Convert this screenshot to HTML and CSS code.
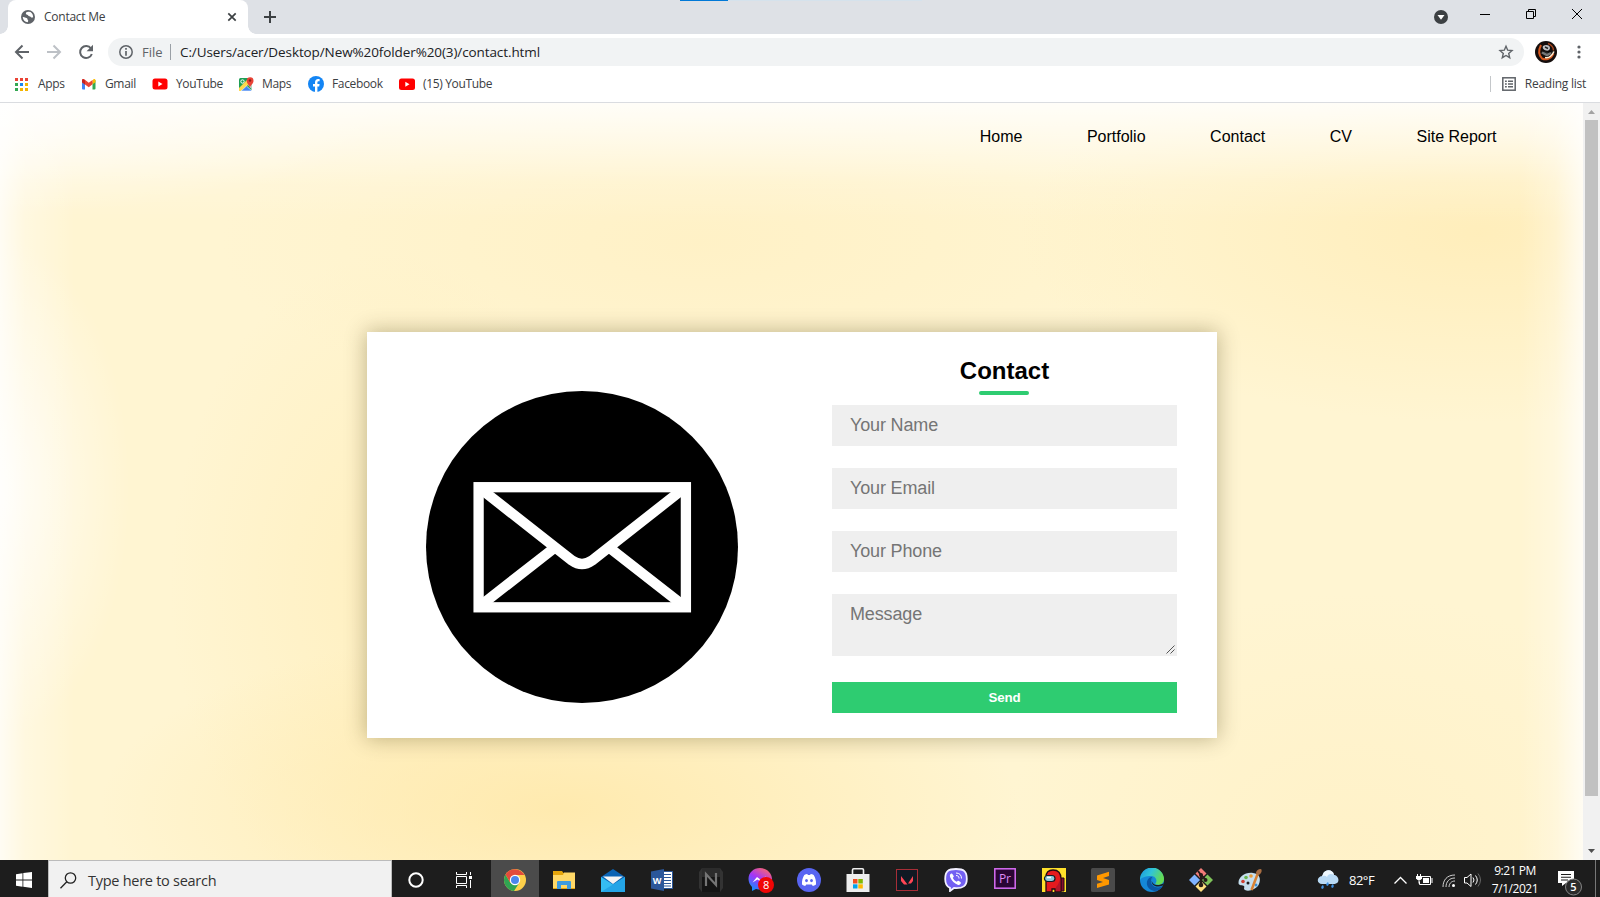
FILE: index.html
```html
<!DOCTYPE html>
<html lang="en">
<head>
<meta charset="utf-8">
<title>Contact Me</title>
<link rel="stylesheet" href="styles.css">
</head>
<body>
<div class="tabstrip">
  <div class="tab">
    <svg class="tab-icon" width="14" height="14" viewBox="0 0 14 14"><circle cx="7" cy="7" r="7" fill="#5f6368"/><path d="M7.500 1.800C5 2 4.600 3 5 4c.5 1 2 .5 2.200 1.500.3 1.200 2 .6 2.600 1.500.4.8 1.200.5 2.400.2C12 3.500 10 1.600 7.500 1.800zM1.700 7c.2 3 2.300 5 5 5.300.5-1 .8-1.600.2-2.300-.7-.8-.3-1.800-1.400-2-1.300-.2-2.100-1.400-3.800-1z" fill="#fff"/></svg>
    <span class="tab-title">Contact Me</span>
    <svg class="tab-close" width="10" height="10" viewBox="0 0 10 10" stroke="#3c4043" stroke-width="1.700"><path d="M1.300 1.300l7.400 7.400M8.700 1.300L1.300 8.700"/></svg>
  </div>
  <svg class="new-tab" width="14" height="14" viewBox="0 0 14 14" stroke="#3c4043" stroke-width="2"><path d="M7 1v12M1 7h12"/></svg>
  <div class="load-bars"><i class="load-blue"></i><i class="load-pale"></i></div>
  <div class="win-controls">
    <svg width="46" height="34" viewBox="0 0 46 34"><circle cx="25" cy="17" r="7" fill="#3c4043"/><path d="M21.500 15h7L25 19.800z" fill="#fff"/></svg>
    <svg width="46" height="34" viewBox="0 0 46 34"><path d="M18 14.500h10" stroke="#000"/></svg>
    <svg width="46" height="34" viewBox="0 0 46 34" fill="none" stroke="#000"><path d="M18.500 11.500h7v7h-7zM20.500 11.500v-2h7v7h-2"/></svg>
    <svg width="46" height="34" viewBox="0 0 46 34" stroke="#000"><path d="M18 9l10 10M28 9L18 19"/></svg>
  </div>
</div>
<div class="toolbar">
  <svg class="nav-icons" width="108" height="36" viewBox="0 0 108 36" fill="none" stroke-width="2">
    <path d="M29 18H16.500M22.500 11.500L16 18l6.500 6.500" stroke="#5f6368"/>
    <path d="M47 18h12.500M53.500 11.500L60 18l-6.500 6.500" stroke="#bdc1c6"/>
    <path d="M91 14.500A6 6 0 1 0 91.800 20" stroke="#5f6368"/><path d="M93 10.800v6.400h-6.400z" fill="#5f6368"/>
  </svg>
  <div class="omnibox">
    <svg width="14" height="14" viewBox="0 0 14 14"><circle cx="7" cy="7" r="6.200" fill="none" stroke="#5f6368" stroke-width="1.500"/><path d="M7 3v1.700M7 6v4.800" stroke="#5f6368" stroke-width="1.700"/></svg>
    <span class="scheme">File</span><i class="divider"></i>
    <span class="url">C:/Users/acer/Desktop/New%20folder%20(3)/contact.html</span>
    <svg class="star" width="16" height="16" viewBox="0 0 16 16" fill="none" stroke="#5f6368" stroke-width="1.400"><path d="M8 2.200l1.700 4 4.300.4-3.300 2.900 1 4.200L8 11.500l-3.700 2.200 1-4.200L2 6.600l4.300-.4z"/></svg>
  </div>
  <svg class="avatar" width="22" height="22" viewBox="0 0 22 22"><circle cx="11" cy="11" r="11" fill="#140d0c"/><path d="M6 4C3.500 9 3.500 14 7 17.500c4 2 9 .5 11.500-5" fill="none" stroke="#d4561c" stroke-width="2"/><path d="M13 2.500c3 1 5.500 4 5.500 7" fill="none" stroke="#a8441a" stroke-width="1.500"/><path d="M8 5c3-2 7-1 7 2 0 2-2 3-4 2.500S7 7.500 8 5z" fill="#bfc1c5"/><path d="M10 6l3 1.500M6 12l4-1 5 2 3-3" stroke="#222" stroke-width="1.500"/><path d="M7 11.500l5 2.500 4-2" fill="none" stroke="#777" stroke-width="2.500"/><path d="M10 16.500c4 1 7-2 9-6" fill="none" stroke="#fff0d5" stroke-width="1.500"/></svg>
  <svg class="kebab" width="4" height="14" viewBox="0 0 4 14" fill="#5f6368"><circle cx="2" cy="2" r="1.600"/><circle cx="2" cy="7" r="1.600"/><circle cx="2" cy="12" r="1.600"/></svg>
</div>
<div class="bookmarks">
  <div class="bm bm-apps"><svg width="14" height="14" viewBox="0 0 14 14"><path d="M1 1h3v3H1zM6 1h3v3H6zM11 1h3v3h-3z" fill="#ea4335"/><path d="M1 6h3v3H1z" fill="#34a853"/><path d="M6 6h3v3H6z" fill="#1a86f0"/><path d="M11 6h3v3h-3zM6 11h3v3H6zM11 11h3v3h-3z" fill="#f4b400"/><path d="M1 11h3v3H1z" fill="#34a853"/></svg><span>Apps</span></div>
  <div class="bm bm-gmail"><svg width="15" height="12" viewBox="0 0 15 12"><path d="M1 2l3 2v7.500H2a1 1 0 0 1-1-1z" fill="#4285f4"/><path d="M14.500 2l-3 2v7.500h2a1 1 0 0 0 1-1z" fill="#34a853"/><path d="M11.500 2.500l1-1.200c1-.8 2 0 2 1.200v1.800l-3 2z" fill="#fbbc04"/><path d="M1 4.300V2.500C1 1 2.200.5 3.300 1.300L7.750 4.700l3.750-2.800v4.400L7.750 9.200 4 6.400z" fill="#ea4335"/><path d="M1 4.300V2.500c0-.8.4-1.300 1-1.500l2 1.500v4z" fill="#c5221f"/></svg><span>Gmail</span></div>
  <div class="bm bm-yt"><svg width="16" height="12" viewBox="0 0 16 12"><rect x=".5" y=".5" width="15" height="11" rx="2.500" fill="#f00"/><path d="M6.300 3.500v5l4.200-2.500z" fill="#fff"/></svg><span>YouTube</span></div>
  <div class="bm bm-maps"><svg width="16" height="16" viewBox="0 0 16 16"><rect x="1" y="2" width="12.500" height="13" rx="1.500" fill="#1e9e55"/><path d="M1 12l9-9 3.500 3L3 15H1z" fill="#ffd84c"/><path d="M3 15l5.500-5L14 15z" fill="#4285f4" stroke="#fff" stroke-width=".6"/><path d="M10 9l3.500 4V7z" fill="#dcdcdc"/><circle cx="4.500" cy="5.500" r="1.700" fill="none" stroke="#fff"/><path d="M12 12c-.3-3-3.300-4-3.300-7.300a3.400 3.400 0 0 1 6.800 0C15.500 8 12.300 9 12 12z" fill="#e94235"/><circle cx="12" cy="4.500" r="1.200" fill="#8a1f17"/></svg><span>Maps</span></div>
  <div class="bm bm-fb"><svg width="16" height="16" viewBox="0 0 16 16"><circle cx="8" cy="8" r="8" fill="#1485f4"/><path d="M7 16v-5.500H5V8h2V6.500C7 4.300 8.200 3 10.200 3l1.400.1v2.200h-1C9.600 5.300 9.400 5.900 9.400 6.500V8h2.200l-.4 2.500H9.400V16z" fill="#fff"/></svg><span>Facebook</span></div>
  <div class="bm bm-yt2"><svg width="16" height="12" viewBox="0 0 16 12"><rect y=".5" width="16" height="11.500" rx="2.500" fill="#f00"/><path d="M6.300 3.800v5l4.200-2.500z" fill="#fff"/></svg><span>(15) YouTube</span></div>
  <div class="reading"><svg width="14" height="14" viewBox="0 0 14 14" fill="none" stroke="#5f6368" stroke-width="1.500"><rect x=".8" y=".8" width="12.400" height="12.400"/><path d="M3 4.200h1.800M6 4.200h5M3 7h1.800M6 7h5M3 9.800h1.800M6 9.800h5"/></svg><span>Reading list</span></div>
</div>
<div class="viewport">
  <main class="page">
    <nav class="menu"><a>Home</a><a>Portfolio</a><a>Contact</a><a>CV</a><a>Site Report</a></nav>
    <section class="card">
      <svg class="mail-art" width="430" height="406" viewBox="367 332 430 406">
        <circle cx="582" cy="547" r="156"/>
        <g fill="none" stroke="#fff" stroke-width="10.300"><rect x="478.600" y="487.200" width="207.300" height="120.100"/><path d="M480 488.300l92 72.200q10 7 20 0L684 488.300M480 606l73-57M684 606l-73-57"/></g>
      </svg>
      <form class="form">
        <h2>Contact</h2>
        <input class="field" type="text" placeholder="Your Name">
        <input class="field" type="text" placeholder="Your Email">
        <input class="field" type="text" placeholder="Your Phone">
        <div class="message-box">
          <textarea class="field message" placeholder="Message"></textarea>
          <svg class="grip" width="9" height="9" viewBox="0 0 9 9" stroke="#555"><path d="M.5 8.500l8-8M4.500 8.500l4-4"/></svg>
        </div>
        <button class="send" type="button">Send</button>
      </form>
    </section>
  </main>
  <div class="scrollbar">
    <svg width="17" height="17" viewBox="0 0 17 17"><path d="M5 11l3.500-4L12 11z" fill="#a3a3a3"/></svg>
    <i class="thumb"></i>
    <svg class="down" width="17" height="17" viewBox="0 0 17 17"><path d="M5 6l3.500 4L12 6z" fill="#505050"/></svg>
  </div>
</div>
<div class="taskbar">
  <div class="start"><svg width="16" height="16" viewBox="0 0 16 16" fill="#fff"><path d="M0 2.200l6.500-.9v6.300H0zM7.300 1.100L16 0v7.600H7.300zM0 8.400h6.500v6.300L0 13.800zM7.300 8.400H16V16l-8.700-1.200z"/></svg></div>
  <div class="search"><svg width="17" height="17" viewBox="0 0 17 17" fill="none" stroke="#222" stroke-width="1.300"><circle cx="10.500" cy="6" r="5.200"/><path d="M6.800 9.700L.5 16.200"/></svg><span>Type here to search</span></div>
  <div class="sys"><svg width="18" height="18" viewBox="0 0 18 18"><circle cx="9" cy="9" r="6.700" fill="none" stroke="#fff" stroke-width="2"/></svg></div>
  <div class="sys"><svg width="18" height="16" viewBox="0 0 18 16" fill="none" stroke="#fff"><path d="M1.500 0v2.500h10V0M1.500 16v-2.500h10V16M1.500 4.500h10v7h-10zM15.500 0v3M15.500 8v8"/><path d="M14 4h3v3h-3z" fill="#fff" stroke="none"/></svg></div>
  <div class="apps">
    <div class="app active"><svg width="22" height="22" viewBox="0 0 22 22"><circle cx="11" cy="11" r="11" fill="#fdd04a"/><path d="M1.500 5.500A11 11 0 0 0 10 22l5.500-8.500L6.500 14z" fill="#30a452"/><path d="M1.500 5.500L6.200 13.500l4.800-7.500h9.500A11 11 0 0 0 1.500 5.500z" fill="#e24b3c"/><circle cx="11" cy="11" r="5.200" fill="#fff"/><circle cx="11" cy="11" r="4" fill="#4a86ed"/></svg></div>
    <div class="app"><svg width="22" height="18" viewBox="0 0 22 18"><path d="M0 0h9l1.500 2H22v16H0z" fill="#e5a50b"/><path d="M0 4h10l1-2.500h11V17H0z" fill="#ffd867"/><path d="M4 18v-7q0-1 1-1h12q1 0 1 1v7h-4v-4H8v4z" fill="#3d9be0"/></svg></div>
    <div class="app"><svg width="24" height="23" viewBox="0 0 24 23"><path d="M0 8L12 0l12 8v15H0z" fill="#0a63b4"/><path d="M0 8l12 7.500L24 8v15H0z" fill="#35bdf2"/><path d="M2 7.500h20l-10 7.500z" fill="#f4f4f4"/><path d="M0 23L24 8v15z" fill="#1995df" opacity=".6"/></svg></div>
    <div class="app"><svg width="22" height="22" viewBox="0 0 22 22"><path d="M12 2.500h9.500v17H12z" fill="#fff" stroke="#2b579a"/><path d="M13 5.500h7M13 8.500h7M13 11.500h7M13 14.500h7M13 17h7" stroke="#2b579a"/><path d="M0 2.500L13 0v22L0 19.500z" fill="#2b579a"/><text class="word-letter" x="1.800" y="14.700">W</text></svg></div>
    <div class="app"><svg width="24" height="24" viewBox="0 0 24 24"><path d="M3 0h18l3 4v16l-3 4H3l-3-4V4z" fill="#333"/><path d="M3 0h18v24H3z" fill="#151515"/><path d="M3 0h18v9H3z" fill="#2c2c2c"/><path d="M7 18V6l10 11V5" fill="none" stroke="#757575" stroke-width="2.200"/></svg></div>
    <div class="app msgr"><svg width="26" height="26" viewBox="0 0 26 26"><defs><linearGradient id="ms" x1=".8" y1="0" x2=".2" y2="1"><stop offset="0" stop-color="#ff6968"/><stop offset=".5" stop-color="#a334fa"/><stop offset="1" stop-color="#0993ff"/></linearGradient></defs><path d="M12 1C5.500 1 .5 5.700.5 12c0 3.300 1.500 6 3.500 8v4l4-2c10 2.500 16-3 16-10C24 5.700 18.500 1 12 1z" fill="url(#ms)"/><path d="M4.500 15.500l4.500-5.500 4 3 5-4-5 6-3.500-2.500z" fill="#fff"/><circle cx="18" cy="18" r="8" fill="#f00505"/><text class="badge-num" x="15" y="22">8</text></svg></div>
    <div class="app"><svg width="24" height="24" viewBox="0 0 24 24"><circle cx="12" cy="12" r="12" fill="#5865f2"/><path d="M5 16.500c-.3-4 .8-7 2.300-9.500 1-.6 2-.8 3-1l.6 1.100h2.200L13.700 6c1 .2 2 .4 3 1 1.500 2.500 2.600 5.500 2.300 9.500-1.200.9-2.200 1.300-3.200 1.500l-1-1.600h-5.600l-1 1.600C7.200 17.800 6.200 17.400 5 16.500z" fill="#fff"/><ellipse cx="9.500" cy="12.600" rx="1.400" ry="1.600" fill="#5865f2"/><ellipse cx="14.500" cy="12.600" rx="1.400" ry="1.600" fill="#5865f2"/></svg></div>
    <div class="app"><svg width="24" height="24" viewBox="0 0 24 24"><path d="M6.500 7V2q0-1.200 1.200-1.200h8.600q1.200 0 1.200 1.200v5" fill="none" stroke="#eee" stroke-width="1.600"/><path d="M.5 6h23v18H.5z" fill="#eee"/><path d="M7 11h4.500v4.500H7z" fill="#f25022"/><path d="M12.300 11h4.500v4.500h-4.500z" fill="#7fba00"/><path d="M7 16.300h4.500v4.200H7z" fill="#00a4ef"/><path d="M12.300 16.300h4.500v4.200h-4.500z" fill="#ffb900"/></svg></div>
    <div class="app"><svg width="22" height="22" viewBox="0 0 22 22"><rect x=".5" y=".5" width="21" height="21" fill="#101923" stroke="#a72e37"/><path d="M5 7l6.500 8.500H8L5 12zM17 7v5l-2 2.500h-3z" fill="#ff4655"/></svg></div>
    <div class="app"><svg width="24" height="24" viewBox="0 0 24 24"><path d="M12 1C4 1 1.200 3.500 1.200 11c0 5 1.500 7.600 4.800 8.800V23l4-3c9 .7 12.800-2 12.800-9C22.800 3.500 20 1 12 1z" fill="#7360f2" stroke="#f2f0ff" stroke-width="1.800"/><path d="M7.500 5.500c-1.500.6-2.200 2-1.200 4 1.700 3.600 4 6 7.400 7.200 1.600.6 2.700-.1 3.300-1.600.3-.8-2.500-2.600-3.200-2.300l-1 1c-2-.8-3.200-2-4-4l1-1C10 8.200 8.300 5.200 7.500 5.500z" fill="#fff"/><path d="M12 5c3.500 0 5.500 2 5.500 5.500M12 7.500c2 0 3 1 3 3" fill="none" stroke="#fff"/></svg></div>
    <div class="app prem"><svg width="22" height="21" viewBox="0 0 22 21"><rect x=".8" y=".8" width="20.400" height="19.400" fill="#2a0634" stroke="#d76df5" stroke-width="1.500"/><text class="pr" x="4.900" y="14.500">Pr</text></svg></div>
    <div class="app"><svg width="24" height="24" viewBox="0 0 24 24"><path d="M0 0h24v24H0z" fill="#ffe12b"/><path d="M17 10h5v13h-5z" fill="#850f31" stroke="#210914"/><path d="M4 24V9q0-7 7-7 8 0 8 9v13h-6v-3h-3v3z" fill="#e51a1e" stroke="#210914" stroke-width="1.300"/><path d="M14 19q4-4 4.300-11v15H14z" fill="#b5162a"/><rect x="2.500" y="7.500" width="10.500" height="6" rx="3" fill="#8bc7da" stroke="#151a24" stroke-width="1.200"/><path d="M5 9.500h4" stroke="#fff" stroke-width="1.500"/></svg></div>
    <div class="app"><svg width="24" height="24" viewBox="0 0 24 24"><rect width="24" height="24" rx="1.500" fill="#4a4a4a"/><path d="M6 7.500l12-3.700V8l-6 2 6 2v4.500L6 20v-4.300l6-1.800-6-2z" fill="#ff9800"/></svg></div>
    <div class="app"><svg width="24" height="24" viewBox="0 0 24 24"><defs><linearGradient id="eg" x1="0" y1="0" x2="1" y2=".4"><stop stop-color="#1995df"/><stop offset=".5" stop-color="#30c4d8"/><stop offset="1" stop-color="#65db52"/></linearGradient></defs><circle cx="12" cy="12" r="12" fill="#1588d8"/><path d="M0 12a12 12 0 0 1 24-1c0 5-5 7-9 5 3-3 1-8-4-8C6 8 2 9 0 12z" fill="url(#eg)"/><path d="M11 9c-6 2-6 12 3 14 4 0 7-2 9-5-5 3-12 1-12-5 0-1.500.5-3 1.500-4z" fill="#0b56a4"/><path d="M12.500 10c-1.800 2.500 0 6.500 4 7 2.500.2 5-.5 7-1.500l-.8 2c-5 2.300-11 .5-11-4 0-1.500.3-2.700.8-3.500z" fill="#1d1d1d"/></svg></div>
    <div class="app"><svg width="24" height="24" viewBox="0 0 24 24"><path d="M12 0l5.500 5.500L12 11 6.500 5.500z" fill="#f27c78"/><path d="M5.500 6.500L11 12l-5.500 5.500L0 12z" fill="#80b3ff"/><path d="M18.500 6.500L24 12l-5.500 5.500L13 12z" fill="#7fc35a"/><path d="M12 13l5.500 5.500L12 24l-5.500-5.500z" fill="#ffe080"/><path d="M9 3l3 4v12M12 7l5 5" fill="none" stroke="#251a18" stroke-width="2"/><g fill="#251a18"><circle cx="12" cy="7" r="2"/><circle cx="12" cy="17" r="2.300"/><circle cx="16.500" cy="12" r="2"/></g></svg></div>
    <div class="app"><svg width="24" height="24" viewBox="0 0 24 24"><path d="M.5 15C.5 9 7 4 15 5c7 1 8 6 6 11-2 5-10 8-14 6-2-1 0-3-1-4s-5.500 0-5.500-3z" fill="#c5deed"/><circle cx="5" cy="13.500" r="1.800" fill="#cf4132"/><circle cx="8" cy="9.500" r="1.800" fill="#68b650"/><circle cx="13" cy="8" r="1.800" fill="#eb9c37"/><circle cx="18" cy="17" r="1.500" fill="#398fd5"/><circle cx="10" cy="15" r="1.500" fill="#1d1d1d"/><path d="M13.500 22L20 5" stroke="#d98232" stroke-width="2.500"/><path d="M18 5c0-2 2-4 5-4 2 2-1 6-3 6z" fill="#a86d42"/></svg></div>
  </div>
  <div class="tray">
    <svg class="weather" width="22" height="20" viewBox="0 0 22 20"><path d="M5 14C1 14-.5 10 2 7.500 4 5.500 5 7 6 4c2-5 10-5 11 1 4 0 6 6 3 8-2 1.500-6 1-8 1z" fill="#b9daf5"/><path d="M6 4c2-5 10-5 11 1-3-2-6-1-7 2-2-2-4-1-5 0z" fill="#eff8ff"/><path d="M5 19q-2-2 1-4 2 3-1 4zM10 16q-2-2 1-4 2 3-1 4zM15 18q-2-2 1-4 2 3-1 4z" fill="#3f91e3"/></svg>
    <span class="temp">82°F</span>
    <svg class="status" width="92" height="20" viewBox="1391 870 92 20" fill="none" stroke="#fff"><path d="M1393.500 883.500l6-6 6 6" stroke-width="1.300"/><path d="M1420.500 876.500h9v8h-11v-3"/><path d="M1422 878h6v5h-6z" fill="#fff" stroke="none"/><path d="M1431 878v5" /><path d="M1416.500 874v3M1419.500 874v3M1418 880v3.500"/><path d="M1415 876h6v2.500l-1.500 1.500h-3l-1.500-1.500z" fill="#fff" stroke="none"/><path d="M1442 887c0-7 4-12 12-12M1445 887c0-5 3-9 9-9M1448 887c0-3 2-6 6-6" stroke="#d0d0d0"/><circle cx="1452.500" cy="885.500" r="1.500" fill="#fff" stroke="none"/><path d="M1463.500 877.500h2.500l4-3.500v12.500l-4-3.500h-2.500zM1472 877.500q2 2.500 0 5M1474.500 875.500q3.500 4.500 0 9"/><path d="M1477 873.500q5 6.500 0 13" stroke="#666"/></svg>
    <div class="clock"><span class="time">9:21 PM</span><span class="date">7/1/2021</span></div>
    <svg class="notif" width="26" height="26" viewBox="0 0 26 26"><path d="M1 1h16v12H9l-4 3v-3H1z" fill="#fff"/><path d="M4 4.500h10M4 7.200h10M4 10h7" stroke="#1d1d1d" stroke-width="1.100"/><circle cx="16.500" cy="17" r="8" fill="#2b2b2b" stroke="#858585"/><text class="notif-num" x="13.300" y="21">5</text></svg>
    <i class="peek"></i>
  </div>
</div>
</body>
</html>
```
FILE: styles.css
```css
* { box-sizing: border-box; }
body { margin: 0; width: 1600px; height: 897px; overflow: hidden; display: flex; flex-direction: column; background: #fff; font-family: "Open Sans", "Noto Sans", sans-serif; font-size: 12px; color: #3c4043; }
svg { display: block; flex: none; }
span { white-space: nowrap; }

/* browser chrome */
.tabstrip { height: 34px; flex: none; background: #dee1e6; display: flex; align-items: center; padding-left: 8px; position: relative; }
.tab { width: 240px; height: 34px; background: #fff; border-radius: 8px 8px 0 0; display: flex; align-items: center; padding: 0 11px 0 13px; position: relative; }
.tab::before, .tab::after { content: ""; position: absolute; bottom: 0; width: 8px; height: 8px; }
.tab::before { left: -8px; background: radial-gradient(circle at 0 0, transparent 7.5px, #fff 8px); }
.tab::after { right: -8px; background: radial-gradient(circle at 100% 0, transparent 7.5px, #fff 8px); }
.tab-title { margin: -1px 0 0 9px; letter-spacing: -.25px; }
.tab-close { margin-left: auto; }
.new-tab { margin-left: 15px; }
.load-bars { position: absolute; left: 680px; top: 0; display: flex; }
.load-bars i { height: 1px; }
.load-blue { width: 48px; background: #0078d7; }
.load-pale { width: 194px; background: #d5e2ec; }
.win-controls { margin-left: auto; display: flex; }
.toolbar { height: 36px; flex: none; display: flex; align-items: center; }
.omnibox { width: 1416px; height: 28px; border-radius: 14px; background: #f1f3f4; display: flex; align-items: center; padding: 0 10px 0 11px; font-size: 14px; }
.scheme { margin-left: 9px; width: 28px; font-size: 13px; color: #5f6368; letter-spacing: 0; }
.divider { width: 1px; height: 16px; background: #9aa0a6; }
.url { margin-left: 9px; color: #202124; font-size: 13.5px; letter-spacing: -.1px; }
.star { margin-left: auto; }
.avatar { margin-left: 11px; }
.kebab { margin-left: 20px; }
.bookmarks { height: 33px; flex: none; border-bottom: 1px solid #dadce0; display: flex; align-items: center; padding: 0 14px 4px; }
.bm { display: flex; align-items: center; letter-spacing: -.35px; }
.bm span, .reading span { margin-top: -1px; }
.bm svg { margin-right: 8px; }
.bm-apps { width: 67px; }
.bm-apps svg { margin-right: 10px; }
.bm-gmail { width: 71px; }
.bm-gmail svg { margin-right: 9px; }
.bm-yt { width: 86px; }
.bm-maps { width: 70px; }
.bm-fb { width: 91px; }
.reading { margin-left: auto; height: 16px; border-left: 1px solid #c4c7ca; padding-left: 11px; display: flex; align-items: center; gap: 9px; letter-spacing: -.25px; }

/* web page */
.viewport { flex: 1; min-height: 0; display: flex; font-family: "Liberation Sans", Arial, sans-serif; }
.page { width: 1583px; flex: none; padding-top: 24px; background:
  linear-gradient(90deg, rgba(255,255,255,.75), rgba(255,255,255,.3) 25px, transparent 75px, transparent 1520px, rgba(255,255,255,.25) 1555px, rgba(255,255,255,.75)),
  linear-gradient(180deg, rgba(255,255,255,.85), rgba(255,255,255,.55) 35px, rgba(255,255,255,.15) 80px, transparent 120px),
  radial-gradient(ellipse 400px 110px at 0 0, rgba(255,255,255,.7), transparent),
  radial-gradient(ellipse 130px 250px at 0 385px, rgba(255,255,255,.75), transparent),
  radial-gradient(ellipse 460px 190px at 1480px 130px, rgba(255,233,172,.6), transparent),
  radial-gradient(ellipse 480px 170px at 700px 140px, rgba(255,239,192,.65), transparent),
  radial-gradient(ellipse 460px 180px at 560px 705px, rgba(255,232,168,.85), transparent),
  radial-gradient(ellipse 220px 330px at 390px 480px, rgba(255,236,180,.6), transparent),
  radial-gradient(ellipse 350px 250px at 1350px 740px, rgba(255,238,190,.5), transparent),
  #fff5d2; }
.menu { display: flex; justify-content: flex-end; gap: 64.5px; padding-right: 86.5px; font-size: 16px; line-height: 20px; color: #000; }
.card { width: 850px; height: 406px; margin: 185px 0 0 367px; background: #fff; display: flex; box-shadow: 0 0 20px 1px rgba(60,50,0,.32); }
.form { width: 345px; margin-left: 35px; padding-top: 25px; display: flex; flex-direction: column; }
.form h2 { margin: 0 0 22px; height: 26px; line-height: 28px; font-size: 24px; text-align: center; color: #000; position: relative; }
.form h2::after { content: ""; position: absolute; left: 147px; top: 34px; width: 50px; height: 4px; border-radius: 2px; background: #2ecc71; }
.field { display: block; width: 100%; height: 41px; flex: none; margin: 0 0 22px; border: 0; background: #efefef; padding: 0 18px; font: 18px "Liberation Sans", Arial, sans-serif; letter-spacing: -.15px; }
.field::placeholder { color: #757575; }
.message-box { position: relative; margin-bottom: 26px; }
.message { height: 62px; padding: 10px 18px; margin: 0; resize: none; }
.grip { position: absolute; right: 2px; bottom: 2px; }
.send { height: 31px; border: 0; background: #2ecc71; color: #fff; font: bold 13.33px "Liberation Sans", Arial, sans-serif; letter-spacing: -.2px; padding: 0; }
.scrollbar { width: 17px; background: #f1f1f1; display: flex; flex-direction: column; align-items: center; }
.thumb { width: 13px; height: 676px; background: #c1c1c1; }
.down { margin-top: auto; }

/* taskbar */
.taskbar { height: 37px; flex: none; background: #1d1d1d; display: flex; color: #fff; }
.start { width: 48px; display: flex; align-items: center; justify-content: center; padding-top: 3px; }
.search { width: 344px; background: #f1f1f1; border: 1px solid #bbb; border-bottom: 0; display: flex; align-items: center; padding: 3px 0 0 11px; color: #333; font-size: 14.5px; letter-spacing: -.27px; }
.search span { margin-left: 11px; }
.sys { width: 48px; display: flex; align-items: center; justify-content: center; padding-top: 3px; }
.apps { margin-left: 3px; display: flex; }
.app { width: 49px; display: flex; align-items: center; justify-content: center; padding-top: 3px; }
.active { width: 48px; background: #4b4b4b; }
.msgr { padding-left: 2px; }
.prem { padding-top: 0; }
.word-letter { font: bold 9px "Open Sans", sans-serif; fill: #fff; }
.badge-num { font: 11px "Open Sans", sans-serif; fill: #fff; }
.pr { font: 12px "Open Sans", sans-serif; fill: #df8bf7; }
.notif-num { font: 600 11px "Open Sans", sans-serif; fill: #fff; }
.tray { flex: 1; display: flex; align-items: center; padding: 3px 4px 0 0; justify-content: flex-end; }
.weather { margin-right: 10px; }
.temp { width: 28px; margin-right: 15px; font-size: 13px; letter-spacing: -.5px; }
.clock { width: 62px; display: flex; flex-direction: column; align-items: center; font-size: 12px; line-height: 18px; letter-spacing: -.45px; }
.notif { margin: 5px 12px 0 11px; }
.peek { width: 1px; height: 37px; margin-top: -3px; background: #777; }
```
